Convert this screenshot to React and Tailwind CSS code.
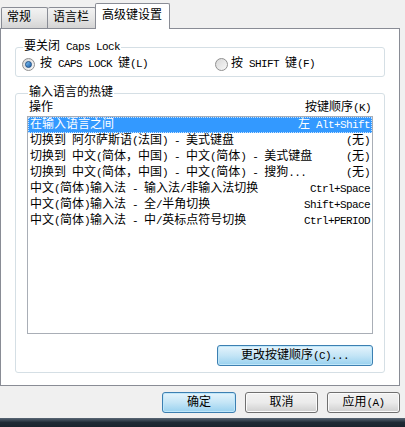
const font = "font-['Liberation_Mono','Noto_Sans_CJK_SC',monospace]"

// SimSun draws latin at half the CJK width, so latin runs get a narrower mono setting
const T = ({ children }) =>
  children.split(/([\x20-\x7e]+)/).map((s, i) =>
    /^[\x20-\x7e]/.test(s) ? (
      <span key={i} className="text-[11px] tracking-[-0.6px]">
        {s}
      </span>
    ) : (
      s
    )
  )

const rows = [
  { name: '在输入语言之间', key: '左 Alt+Shift', selected: true },
  { name: '切换到 阿尔萨斯语(法国) - 美式键盘', key: '(无)' },
  { name: '切换到 中文(简体，中国) - 中文(简体) - 美式键盘', key: '(无)' },
  { name: '切换到 中文(简体，中国) - 中文(简体) - 搜狗...', key: '(无)' },
  { name: '中文(简体)输入法 - 输入法/非输入法切换', key: 'Ctrl+Space' },
  { name: '中文(简体)输入法 - 全/半角切换', key: 'Shift+Space' },
  { name: '中文(简体)输入法 - 中/英标点符号切换', key: 'Ctrl+PERIOD' },
]

const Radio = ({ checked }) => (
  <span className="w-[13px] h-[13px] rounded-full border border-[#8f8f8f] bg-gradient-to-br from-[#d8d8d8] to-[#f8f8f8] flex items-center justify-center shrink-0">
    {checked && (
      <span className="w-[7px] h-[7px] rounded-full bg-gradient-to-br from-[#7fc4f5] to-[#1c5fa8] border border-[#1d4f86]" />
    )}
  </span>
)

const Button = ({ children, primary, className = '' }) => (
  <button
    className={`h-[21px] rounded-[3px] border text-[12px] text-black flex items-center justify-center ${
      primary
        ? 'border-[#3c7fb1] bg-gradient-to-b from-[#e5f4fc] via-[#c4e5f6] to-[#98d1ef] shadow-[inset_0_0_0_1px_#bfe7fa]'
        : 'border-[#707070] bg-gradient-to-b from-[#f2f2f2] via-[#ebebeb] to-[#cfcfcf] shadow-[inset_0_0_0_1px_#fbfbfb]'
    } ${className}`}
  >
    <T>{children}</T>
  </button>
)

export default function App() {
  return (
    <div className={`w-[405px] h-[427px] bg-[#f0f0f0] flex flex-col text-[12px] leading-[14px] text-black ${font}`}>
      {/* tabs */}
      <div className="h-[29px] flex items-end pl-[1px] relative z-10 -mb-[1px]">
        <div className="w-[47px] h-[21px] border border-[#898c95] border-b-0 rounded-t-[2px] bg-gradient-to-b from-[#f3f3f3] via-[#e6e6e6] to-[#d4d4d4] flex items-center pl-[5px] mb-[1px]">
          常规
        </div>
        <div className="w-[48px] h-[21px] border border-l-0 border-[#898c95] border-b-0 rounded-t-[2px] bg-gradient-to-b from-[#f3f3f3] via-[#e6e6e6] to-[#d4d4d4] flex items-center pl-[5px] mb-[1px]">
          语言栏
        </div>
        <div className="w-[75px] h-[26px] border border-[#898c95] border-b-0 rounded-t-[2px] bg-white flex items-start pt-[5px] pl-[6px] -ml-[1px]">
          高级键设置
        </div>
      </div>

      {/* panel */}
      <div className="w-[400px] h-[358px] border border-[#898c95] bg-white flex flex-col">
        <fieldset className="mt-[11px] mx-[14px] border border-[#d5dfe5] rounded-[3px] px-[6px] pb-[5px]">
          <legend className="ml-[1px] px-[1px]">
            <T>要关闭 Caps Lock</T>
          </legend>
          <div className="flex items-center h-[14px] mt-[3px]">
            <div className="flex items-center gap-[5px] w-[193px]">
              <Radio checked />
              <span>
                <T>按 CAPS LOCK 键(L)</T>
              </span>
            </div>
            <div className="flex items-center gap-[3px]">
              <Radio />
              <span>
                <T>按 SHIFT 键(F)</T>
              </span>
            </div>
          </div>
        </fieldset>

        <fieldset className="mt-[9px] mx-[14px] border border-[#d5dfe5] rounded-[3px] px-[11px] pb-[6px]">
          <legend className="ml-[1px] px-[1px]">输入语言的热键</legend>
          <div className="flex justify-between h-[16px] pt-[1px] px-[2px]">
            <span>操作</span>
            <span>
              <T>按键顺序(K)</T>
            </span>
          </div>
          <div className="h-[218px] border border-[#a9aeb6] bg-white">
            {rows.map((r) => (
              <div
                key={r.name}
                className={`h-[16px] flex justify-between items-center px-[2px] whitespace-nowrap ${
                  r.selected ? 'bg-[#3399ff] text-white outline-1 outline-dotted outline-[#c8e2ff] -outline-offset-1' : ''
                }`}
              >
                <span>
                  <T>{r.name}</T>
                </span>
                <span>
                  <T>{r.key}</T>
                </span>
              </div>
            ))}
          </div>
          <div className="flex justify-end mt-[11px]">
            <Button primary className="w-[156px] h-[19px]">
              更改按键顺序(C)...
            </Button>
          </div>
        </fieldset>
      </div>

      {/* bottom buttons */}
      <div className="flex justify-end gap-[9px] pr-[5px] mt-[6px]">
        <Button primary className="w-[74px] shadow-[0_0_0_1px_#a9dcf7,inset_0_0_0_1px_#bfe7fa]">
          确定
        </Button>
        <Button className="w-[73px]">取消</Button>
        <Button className="w-[73px]">应用(A)</Button>
      </div>

      <div className="mt-auto h-[9px] bg-gradient-to-b from-[#5a6876] via-[#1f2a35] to-[#1a242e]" />
    </div>
  )
}
